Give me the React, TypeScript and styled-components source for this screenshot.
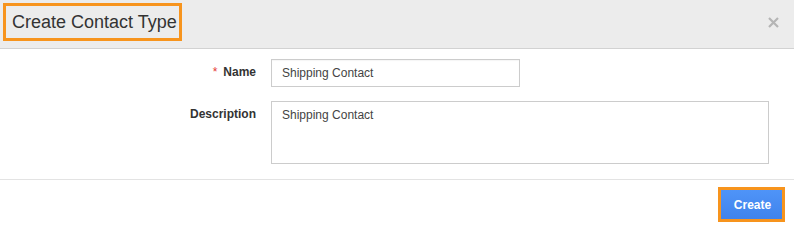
import React from "react";
import styled, { createGlobalStyle } from "styled-components";

const Global = createGlobalStyle`
  html, body { margin: 0; padding: 0; background: #fff; }
  body { font-family: "Liberation Sans", Arial, sans-serif; }
  * { box-sizing: border-box; }
`;

const Modal = styled.div`
  width: 794px;
  height: 228px;
  background: #fff;
  display: flex;
  flex-direction: column;
`;

const Header = styled.div`
  height: 49px;
  background: #ececec;
  border-bottom: 1px solid #d2d2d2;
  display: flex;
  align-items: flex-start;
  justify-content: space-between;
  padding: 3px 15px 0 3px;
`;

const Title = styled.h4`
  margin: 0;
  border: 3px solid #f7941d;
  height: 38px;
  padding: 0 2px 0 6px;
  display: flex;
  align-items: center;
  font-size: 18px;
  font-weight: 400;
  color: #333;
`;

const Close = styled.button`
  border: 0;
  background: none;
  padding: 0;
  margin-top: 13px;
  width: 12px;
  height: 12px;
  display: flex;
  align-items: center;
  justify-content: center;
  cursor: pointer;
`;

const Body = styled.div`
  padding: 10px 25px 0 0;
  display: flex;
  flex-direction: column;
  gap: 14px;
  height: 131px;
  border-bottom: 1px solid #e3e3e3;
`;

const Row = styled.div`
  display: flex;
  align-items: flex-start;
  gap: 15px;
`;

const Label = styled.label`
  width: 256px;
  text-align: right;
  font-size: 12px;
  font-weight: 700;
  color: #333;
  padding-top: 6px;
`;

const Star = styled.span`
  color: #e53935;
  margin-right: 6px;
  font-weight: 400;
`;

const Input = styled.input<{ $w: number }>`
  width: ${(p) => p.$w}px;
  height: 28px;
  border: 1px solid #ccc;
  padding: 0 10px;
  font-family: "Liberation Sans", Arial, sans-serif;
  font-size: 12px;
  color: #444;
  outline: none;
  box-shadow: inset 0 1px 1px rgba(0,0,0,0.04);
`;

const TextArea = styled.textarea`
  width: 498px;
  height: 63px;
  border: 1px solid #ccc;
  padding: 6px 10px;
  font-family: "Liberation Sans", Arial, sans-serif;
  font-size: 12px;
  color: #444;
  resize: none;
  outline: none;
  margin: 0;
  display: block;
`;

const Footer = styled.div`
  display: flex;
  justify-content: flex-end;
  padding: 7px 9px 0 0;
`;

const CreateButton = styled.button`
  border: 3px solid #f7941d;
  background: linear-gradient(#4f94f8, #3f83ec);
  color: #fff;
  font-family: "Liberation Sans", Arial, sans-serif;
  font-size: 12px;
  font-weight: 700;
  width: 67px;
  height: 35px;
  padding: 0 0 0 2px;
  cursor: pointer;
`;

export default function App() {
  return (
    <>
      <Global />
      <Modal>
        <Header>
          <Title>Create Contact Type</Title>
          <Close aria-label="close">
            <svg width="11" height="11" viewBox="0 0 11 11">
              <path d="M1 1L10 10M10 1L1 10" stroke="#b5b5b5" strokeWidth="2.2" />
            </svg>
          </Close>
        </Header>
        <Body>
          <Row>
            <Label><Star>*</Star>Name</Label>
            <Input $w={249} defaultValue="Shipping Contact" />
          </Row>
          <Row>
            <Label>Description</Label>
            <TextArea defaultValue="Shipping Contact" />
          </Row>
        </Body>
        <Footer>
          <CreateButton>Create</CreateButton>
        </Footer>
      </Modal>
    </>
  );
}
